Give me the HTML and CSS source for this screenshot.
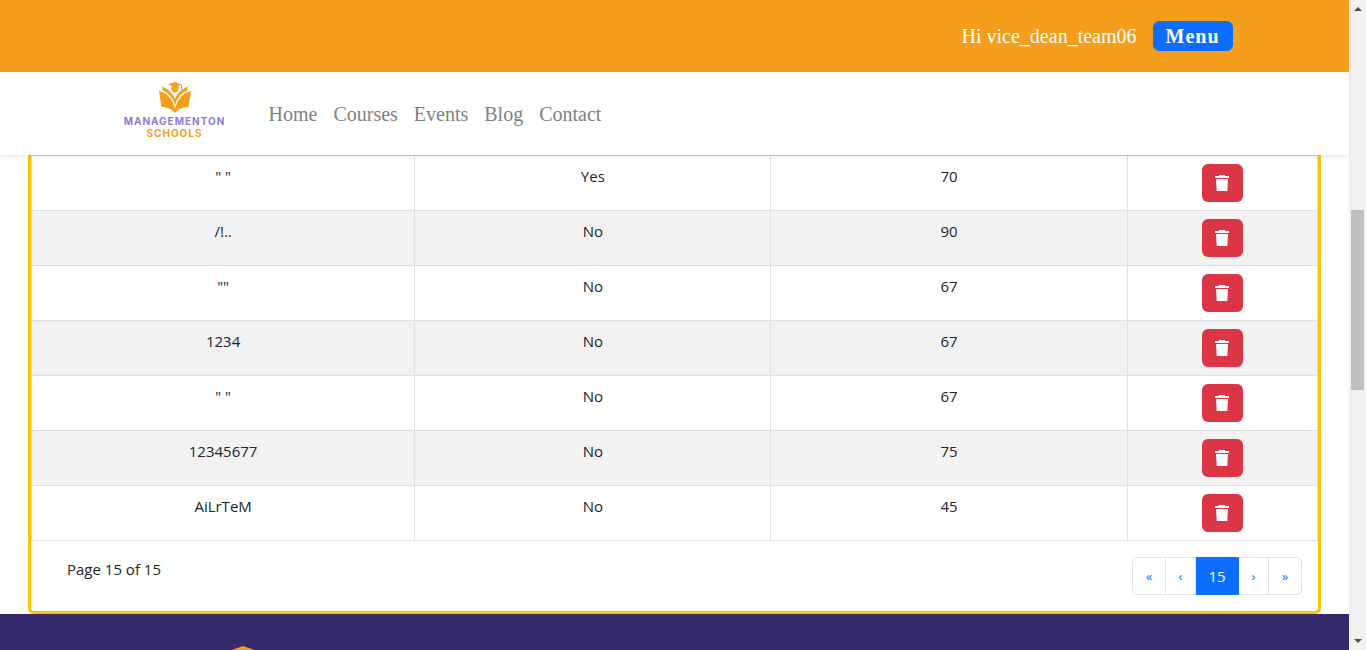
FILE: index.html
```
<!DOCTYPE html>
<html lang="en">
<head>
<meta charset="utf-8">
<title>Managementon Schools</title>
<link rel="stylesheet" href="styles.css">
</head>
<body>
<svg class="defs" aria-hidden="true">
  <symbol id="trash" viewBox="0 0 16 18">
    <path fill="currentColor" d="M1 2h4V1h6v1h4v2H1zM2 5h12l-.7 12H2.7z"/>
  </symbol>
  <symbol id="book" viewBox="0 0 32 31">
    <path fill="#f59e1b" d="M0 9C7 10.500 13 16 16 25c3-9 9-14.500 16-16L29.500 25C24 25 19 27 16 31c-3-4-8-6-13.500-6z"/>
    <path fill="#f59e1b" d="M3.500 4.500C9 7 13.500 11 16 17 18.500 11 23 7 28.500 4.500v5C23 12.500 19 17 16 25 13 17 9 12.500 3.500 9.500z"/>
    <path fill="none" stroke="#fff" stroke-width="1.300" d="M1 8.200C9 10.500 13.500 16 16 24.500c2.500-8.500 7-14 15-16.300"/>
    <path fill="#f59e1b" d="M9 2.500 16 0l7 2.500L16 5zM12.500 4 16 5l3.500-1c.7 4-1 6.500-3.500 6.500S11.800 8 12.500 4zM22.100 2.500h.9V8h-.9z"/>
  </symbol>
</svg>
<div class="page">
  <header class="header">
    <div class="topbar">
      <div class="container topbar-inner">
        <span>Hi vice_dean_team06</span>
        <button class="menu-button" type="button">Menu</button>
      </div>
    </div>
    <nav class="navbar">
      <div class="container navbar-inner">
        <a class="brand" href="#">
          <svg class="brand-mark" aria-hidden="true"><use href="#book"/></svg>
          <span class="brand-name">MANAGEMENTON</span>
          <span class="brand-sub">SCHOOLS</span>
        </a>
        <div class="links">
          <a href="#">Home</a>
          <a href="#">Courses</a>
          <a href="#">Events</a>
          <a href="#">Blog</a>
          <a href="#">Contact</a>
        </div>
      </div>
    </nav>
  </header>
  <main class="content">
    <section class="card">
      <table class="lessons">
        <colgroup><col class="col-name"><col class="col-flag"><col class="col-score"><col class="col-action"></colgroup>
        <tbody>
          <tr><td>" "</td><td>Yes</td><td>70</td><td><button class="delete" type="button" aria-label="Delete"><svg><use href="#trash"/></svg></button></td></tr>
          <tr><td>/!..</td><td>No</td><td>90</td><td><button class="delete" type="button" aria-label="Delete"><svg><use href="#trash"/></svg></button></td></tr>
          <tr><td>""</td><td>No</td><td>67</td><td><button class="delete" type="button" aria-label="Delete"><svg><use href="#trash"/></svg></button></td></tr>
          <tr><td>1234</td><td>No</td><td>67</td><td><button class="delete" type="button" aria-label="Delete"><svg><use href="#trash"/></svg></button></td></tr>
          <tr><td>" "</td><td>No</td><td>67</td><td><button class="delete" type="button" aria-label="Delete"><svg><use href="#trash"/></svg></button></td></tr>
          <tr><td>12345677</td><td>No</td><td>75</td><td><button class="delete" type="button" aria-label="Delete"><svg><use href="#trash"/></svg></button></td></tr>
          <tr><td>AiLrTeM</td><td>No</td><td>45</td><td><button class="delete" type="button" aria-label="Delete"><svg><use href="#trash"/></svg></button></td></tr>
        </tbody>
      </table>
      <div class="paginator">
        <span>Page 15 of 15</span>
        <nav class="pages" aria-label="Pages">
          <button class="wide" type="button">«</button>
          <button type="button">‹</button>
          <button class="current" type="button">15</button>
          <button type="button">›</button>
          <button class="wide" type="button">»</button>
        </nav>
      </div>
    </section>
  </main>
  <footer class="footer">
    <svg class="footer-mark" aria-hidden="true"><use href="#book"/></svg>
  </footer>
</div>
<div class="scrollbar" aria-hidden="true">
  <span class="arrow up"></span>
  <span class="thumb"></span>
  <span class="arrow down"></span>
</div>
</body>
</html>
```
FILE: styles.css
```
* { box-sizing: border-box; }

body {
  margin: 0;
  height: 100vh;
  display: flex;
  overflow: hidden;
  font: 15px/24px "Open Sans", "Noto Sans", sans-serif;
  color: #212529;
  background: #fff;
}

button { font: inherit; cursor: pointer; }
a { text-decoration: none; }
.defs { display: none; }

.page {
  flex: 1;
  min-width: 0;
  display: flex;
  flex-direction: column;
}

.container {
  width: 100%;
  max-width: 1140px;
  margin: 0 auto;
  padding: 0 12px;
}

.header {
  position: relative;
  z-index: 1;
  font: 20px/30px "Liberation Serif", serif;
  box-shadow: 0 2px 4px rgba(0, 0, 0, 0.08);
}

.topbar { background: #f59e1b; color: #fff; padding: 21px 0; }
.topbar-inner {
  display: flex;
  justify-content: flex-end;
  align-items: center;
  gap: 16px;
}
.menu-button {
  border: 1px solid #0d6efd;
  border-radius: 6px;
  height: 30px;
  padding: 0 12px;
  background: #0d6efd;
  color: #fff;
  font-weight: 700;
  line-height: 28px;
  letter-spacing: 1px;
}

.navbar { background: #fff; padding: 8px 0; }
.navbar-inner { display: flex; align-items: center; gap: 28px; }
.brand {
  width: 116px;
  height: 67px;
  padding-top: 2px;
  display: flex;
  flex-direction: column;
  align-items: center;
  font: 700 10px/12px Inter, sans-serif;
  letter-spacing: 1px;
}
.brand-mark { width: 32px; height: 31px; margin-bottom: 2px; }
.brand-name { color: #8d7dd2; }
.brand-sub { color: #f59e1b; }
.links { display: flex; }
.links a { padding: 4px 8px; color: #7f7f7f; }

.content { padding: 0 28px; }
.card {
  border: 3px solid #ffc107;
  border-top: 0;
  border-radius: 0 0 6px 6px;
}

.lessons {
  width: 100%;
  table-layout: fixed;
  border-collapse: separate;
  border-spacing: 0;
  border-left: 1px solid #dee2e6;
  border-top: 1px solid #d0d3d6;
  text-align: center;
}
.lessons td {
  border: 0 solid #dee2e6;
  border-width: 0 1px 1px 0;
  padding: 8px;
  vertical-align: top;
}
.lessons tr:nth-child(even) { background: #f2f2f2; }
.col-name { width: 29.8%; }
.col-flag { width: 27.7%; }
.col-score { width: 27.7%; }
.col-action { width: 14.8%; }

.delete {
  display: block;
  width: 41px;
  height: 38px;
  margin: 0 auto;
  padding: 10px 12px;
  border: 0;
  border-radius: 6px;
  background: #dc3545;
  color: #fff;
}
.delete svg { display: block; width: 16px; height: 18px; }

.paginator {
  display: flex;
  justify-content: space-between;
  padding: 16px 16px 16px 36px;
}
.pages { display: flex; color: #0d6efd; }
.pages button {
  width: 30px;
  height: 38px;
  padding: 0;
  border: 1px solid #dee2e6;
  border-left: 0;
  background: #fff;
  color: #0d6efd;
  font-size: 13px;
}
.pages .wide { width: 34px; }
.pages button:first-child { border-left: 1px solid #dee2e6; border-radius: 6px 0 0 6px; }
.pages button:last-child { width: 33px; border-radius: 0 6px 6px 0; }
.pages .current { width: 43px; background: #0d6efd; border-color: #0d6efd; color: #fff; font-size: 15px; }

.footer {
  flex: 1;
  min-height: 0;
  overflow: hidden;
  padding: 32px 218px;
  background: #35296b;
}
.footer-mark { display: block; width: 50px; height: 48px; }

.scrollbar {
  width: 17px;
  display: flex;
  flex-direction: column;
  align-items: center;
  justify-content: space-between;
  padding: 7px 0;
  background: #f1f1f1;
}
.thumb { width: 13px; height: 180px; margin-bottom: 50px; background: #c1c1c1; }
.arrow { border: 4px solid transparent; }
.up { border-top: 0; border-bottom-color: #505050; }
.down { border-bottom: 0; border-top-color: #505050; }
```
